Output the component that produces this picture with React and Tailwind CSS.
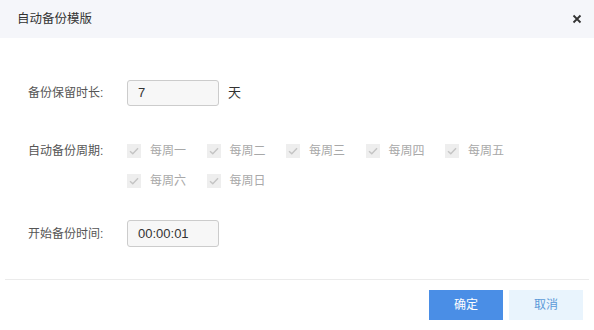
import React from 'react';

const days = [['每周一', '每周二', '每周三', '每周四', '每周五'], ['每周六', '每周日']];

const Check = ({ label }) => (
  <div className="flex items-center w-[79.5px] h-[30px]">
    <span className="w-[14px] h-[14px] bg-[#eeeeee] flex items-center justify-center">
      <svg width="10" height="8" viewBox="0 0 10 8" fill="none">
        <path d="M1 4.2 L3.8 6.8 L9 1.2" stroke="#c4c4c4" strokeWidth="1.4" />
      </svg>
    </span>
    <span className="ml-[9px] text-[12px] text-[#a8a8a8]">{label}</span>
  </div>
);

export default function App() {
  return (
    <div className="w-[594px] h-[330px] bg-white overflow-hidden" style={{ fontFamily: '"Liberation Sans", "Noto Sans CJK SC", sans-serif' }}>
      <div className="h-[38px] bg-[#f5f6fa] flex items-center justify-between pl-[17px] pr-[12px]">
        <span className="text-[12.5px] text-[#333]">自动备份模版</span>
        <svg width="10" height="10" viewBox="0 0 10 10">
          <path d="M1.5 1.5 L8.5 8.5 M8.5 1.5 L1.5 8.5" stroke="#333" strokeWidth="1.8" />
        </svg>
      </div>

      <div className="pt-[42px] pl-[28px]">
        <div className="flex items-center h-[26px]">
          <span className="w-[99px] text-[12px] text-[#555]">备份保留时长:</span>
          <div className="w-[92px] h-[26px] border border-[#cccccc] rounded-[3px] bg-[#f7f7f7] flex items-center pl-[10px] text-[13px] text-[#333]">7</div>
          <span className="ml-[9px] text-[13px] text-[#333]">天</span>
        </div>

        <div className="flex mt-[30px]">
          <span className="w-[99px] h-[30px] flex items-center text-[12px] text-[#555]">自动备份周期:</span>
          <div className="flex flex-col">
            {days.map((row, i) => (
              <div key={i} className="flex">
                {row.map((d) => <Check key={d} label={d} />)}
              </div>
            ))}
          </div>
        </div>

        <div className="flex items-center h-[27px] mt-[24px]">
          <span className="w-[99px] text-[12px] text-[#555]">开始备份时间:</span>
          <div className="w-[92px] h-[27px] border border-[#cccccc] rounded-[3px] bg-[#f7f7f7] flex items-center pl-[10px] text-[13px] text-[#333]">00:00:01</div>
        </div>
      </div>

      <div className="mt-[32px] mx-[5px] border-t border-[#ebebeb]" />

      <div className="flex justify-end gap-[6px] pr-[11px] mt-[10px]">
        <button className="w-[74px] h-[30px] bg-[#4a8ee6] text-white text-[12px]">确定</button>
        <button className="w-[74px] h-[30px] bg-[#e9f4fd] text-[#5c9ad8] text-[12px]">取消</button>
      </div>
    </div>
  );
}
